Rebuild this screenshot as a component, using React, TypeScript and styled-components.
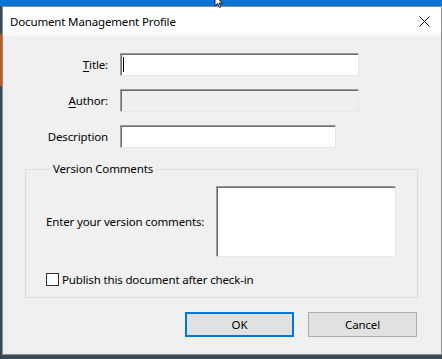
import React from "react";
import styled, { createGlobalStyle } from "styled-components";

const Global = createGlobalStyle`
  html, body { margin: 0; padding: 0; }
  body {
    width: 442px;
    height: 359px;
    overflow: hidden;
    font-family: "Noto Sans", "Open Sans", "Liberation Sans", sans-serif;
    background: #2b2b2b;
  }
`;

const Desktop = styled.div`
  position: relative;
  width: 442px;
  height: 359px;
  box-sizing: border-box;
  padding: 6px 0 4px 2px;
  background:
    linear-gradient(to bottom, transparent 0, transparent 34px, #c05a25 34px, #c05a25 86px, transparent 86px),
    linear-gradient(to bottom, #0b74d6 0, #0b74d6 6px, #3a4a5a 6px, #3a4a5a 100%);
`;

const Cursor = styled.svg`
  position: absolute;
  left: 214px;
  top: -4px;
`;

const Dialog = styled.div`
  width: 440px;
  height: 349px;
  box-sizing: border-box;
  border: 1px solid #8c8c8c;
  background: #f0f0f0;
  display: flex;
  flex-direction: column;
`;

const TitleBar = styled.div`
  height: 29px;
  flex: none;
  background: linear-gradient(to bottom, #ffffff 0, #ffffff 24px, #f6f6f6 29px);
  display: flex;
  align-items: center;
  justify-content: space-between;
  padding: 0 11px 0 7px;
`;

const TitleText = styled.span`
  font-size: 11.5px;
  letter-spacing: -0.15px;
  line-height: 16px;
  color: #000;
`;

const CloseIcon = styled.svg`
  display: block;
`;

const Form = styled.div`
  display: grid;
  grid-template-columns: 105px auto;
  grid-auto-rows: 23px;
  column-gap: 12px;
  row-gap: 13px;
  padding-top: 17px;
  align-items: center;
  justify-items: start;
`;

const Label = styled.label`
  justify-self: end;
  font-size: 11.5px;
  letter-spacing: -0.15px;
  line-height: 16px;
  color: #000;
  u { text-decoration: underline; text-underline-offset: 2px; }
`;

const FieldWrap = styled.div`
  position: relative;
`;

const TextBox = styled.input<{ $w: number; $disabled?: boolean }>`
  display: block;
  box-sizing: border-box;
  width: ${(p) => p.$w}px;
  height: 23px;
  margin: 0;
  padding: 0 4px;
  border: 1px solid;
  border-color: #9a9a9a #e6e6e6 #e6e6e6 #9a9a9a;
  box-shadow: inset 1px 1px 0 #6e6e6e;
  background: ${(p) => (p.$disabled ? "#efefef" : "#ffffff")};
  font-family: inherit;
  font-size: 12px;
  outline: none;
`;

const Caret = styled.span`
  position: absolute;
  left: 3px;
  top: 4px;
  width: 1px;
  height: 15px;
  background: #000;
`;

const Group = styled.fieldset`
  margin: 13px 0 0 22px;
  width: 393px;
  box-sizing: border-box;
  border: 1px solid #dcdcdc;
  padding: 9px 0 11px 20px;
  min-width: 0;
`;

const Legend = styled.legend`
  margin-left: 5px;
  padding: 0 2px;
  font-size: 11.5px;
  letter-spacing: -0.15px;
  line-height: 16px;
  color: #000;
`;

const CommentsRow = styled.div`
  display: flex;
  align-items: center;
`;

const CommentsLabel = styled.span`
  width: 170px;
  font-size: 11.5px;
  letter-spacing: -0.15px;
  line-height: 16px;
  color: #000;
`;

const TextArea = styled.textarea`
  display: block;
  box-sizing: border-box;
  width: 180px;
  height: 71px;
  margin: 0;
  resize: none;
  border: 1px solid;
  border-color: #9a9a9a #e6e6e6 #e6e6e6 #9a9a9a;
  box-shadow: inset 1px 1px 0 #6e6e6e;
  background: #fff;
  outline: none;
`;

const CheckRow = styled.label`
  display: flex;
  align-items: center;
  gap: 3px;
  margin-top: 16px;
  height: 13px;
  font-size: 11.5px;
  letter-spacing: -0.15px;
  line-height: 16px;
  color: #000;
`;

const CheckBox = styled.span`
  width: 13px;
  height: 13px;
  box-sizing: border-box;
  border: 1px solid #333;
  background: #fff;
`;

const Buttons = styled.div`
  display: flex;
  gap: 14px;
  margin: 14px 0 0 182px;
`;

const Button = styled.button<{ $primary?: boolean }>`
  width: 109px;
  height: 25px;
  box-sizing: border-box;
  margin: 0;
  padding: 0;
  background: #e1e1e1;
  border: ${(p) => (p.$primary ? "2px solid #0078d7" : "1px solid #adadad")};
  font-family: inherit;
  font-size: 11.5px;
  letter-spacing: -0.15px;
  color: #000;
`;

export default function App() {
  return (
    <>
      <Global />
      <Desktop>
        <Cursor width="12" height="12" viewBox="0 0 12 12">
          <path d="M1 0 L1 10 L3.5 7.5 L5.5 11.5 L7 10.8 L5 7 L8.5 7 Z" fill="#fff" stroke="#000" strokeWidth="0.8" />
        </Cursor>
        <Dialog>
          <TitleBar>
            <TitleText>Document Management Profile</TitleText>
            <CloseIcon width="11" height="11" viewBox="0 0 11 11">
              <path d="M0.5 0.5 L10.5 10.5 M10.5 0.5 L0.5 10.5" stroke="#111" strokeWidth="1" />
            </CloseIcon>
          </TitleBar>
          <Form>
            <Label>
              <u>T</u>itle:
            </Label>
            <FieldWrap>
              <TextBox $w={239} />
              <Caret />
            </FieldWrap>
            <Label>
              <u>A</u>uthor:
            </Label>
            <TextBox $w={239} $disabled disabled />
            <Label>Description</Label>
            <TextBox $w={216} />
          </Form>
          <Group>
            <Legend>Version Comments</Legend>
            <CommentsRow>
              <CommentsLabel>Enter your version comments:</CommentsLabel>
              <TextArea />
            </CommentsRow>
            <CheckRow>
              <CheckBox />
              Publish this document after check-in
            </CheckRow>
          </Group>
          <Buttons>
            <Button $primary>OK</Button>
            <Button>Cancel</Button>
          </Buttons>
        </Dialog>
      </Desktop>
    </>
  );
}
